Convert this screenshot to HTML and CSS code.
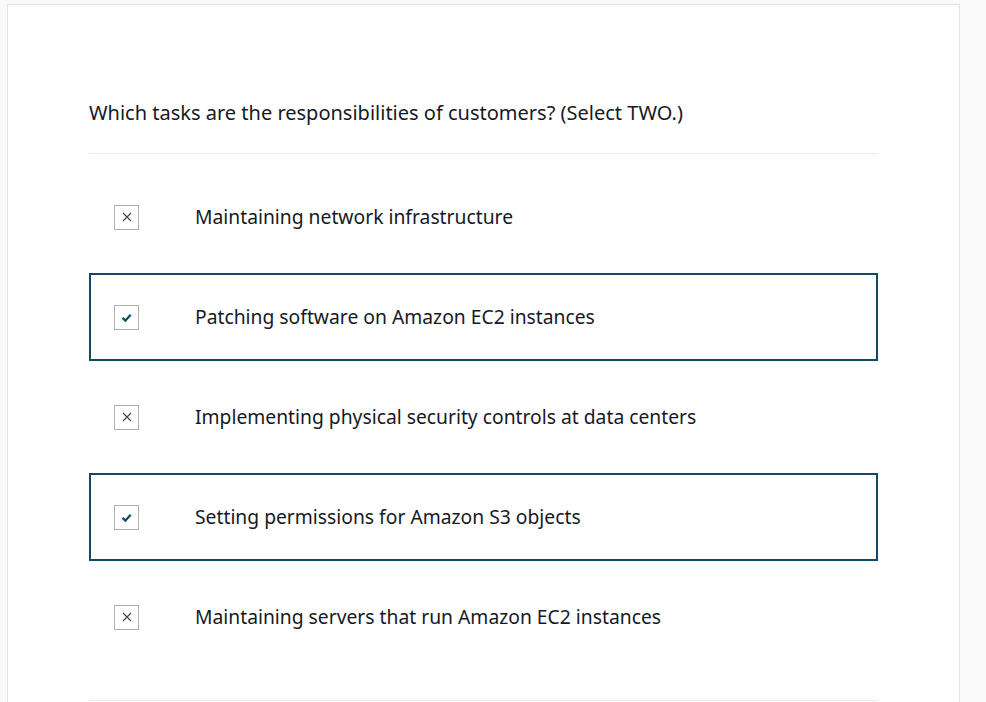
FILE: index.html
```html
<!DOCTYPE html>
<html lang="en">
<head>
<meta charset="utf-8">
<title>Question</title>
<link rel="stylesheet" href="styles.css">
</head>
<body>
<div class="page">
  <div class="card">
    <h1 class="question">Which tasks are the responsibilities of customers? (Select TWO.)</h1>
    <div class="divider"></div>
    <ul class="options">
      <li class="option">
        <span class="box"><svg viewBox="0 0 10 10" width="10" height="10"><path d="M1 1L9 9M9 1L1 9" stroke="#444" stroke-width="1.1" fill="none"/></svg></span>
        <span class="label">Maintaining network infrastructure</span>
      </li>
      <li class="option selected">
        <span class="box"><svg viewBox="0 0 10 10" width="11" height="11"><path d="M1.3 5.3L4 7.8L8.8 2.6" stroke="#0f4a66" stroke-width="2" fill="none"/></svg></span>
        <span class="label">Patching software on Amazon EC2 instances</span>
      </li>
      <li class="option">
        <span class="box"><svg viewBox="0 0 10 10" width="10" height="10"><path d="M1 1L9 9M9 1L1 9" stroke="#444" stroke-width="1.1" fill="none"/></svg></span>
        <span class="label">Implementing physical security controls at data centers</span>
      </li>
      <li class="option selected">
        <span class="box"><svg viewBox="0 0 10 10" width="11" height="11"><path d="M1.3 5.3L4 7.8L8.8 2.6" stroke="#0f4a66" stroke-width="2" fill="none"/></svg></span>
        <span class="label">Setting permissions for Amazon S3 objects</span>
      </li>
      <li class="option">
        <span class="box"><svg viewBox="0 0 10 10" width="10" height="10"><path d="M1 1L9 9M9 1L1 9" stroke="#444" stroke-width="1.1" fill="none"/></svg></span>
        <span class="label">Maintaining servers that run Amazon EC2 instances</span>
      </li>
    </ul>
    <div class="divider"></div>
  </div>
</div>
</body>
</html>
```
FILE: styles.css
```css
html, body {
  margin: 0;
  padding: 0;
}
body {
  background: #fafafa;
  font-family: "Noto Sans", "Open Sans", sans-serif;
  color: #16191f;
}
.page {
  padding: 4px 26px 0 7px;
  height: 698px;
  overflow: hidden;
}
.card {
  background: #fff;
  border: 1px solid #e3e3e3;
  border-bottom: none;
  padding: 93px 81px 40px 81px;
  min-height: 800px;
}
.question {
  margin: 0;
  font-size: 20px;
  font-weight: 400;
  line-height: 30px;
}
.divider {
  height: 1px;
  background: #eaeded;
  margin-top: 25px;
}
.options {
  list-style: none;
  margin: 19px 0 0 0;
  padding: 0;
  display: flex;
  flex-direction: column;
  gap: 12px;
}
.options + .divider {
  margin-top: 39px;
}
.option {
  height: 88px;
  box-sizing: border-box;
  border: 2px solid transparent;
  display: flex;
  align-items: center;
  padding: 0 23px;
}
.option.selected {
  border-color: #0f4a66;
}
.box {
  width: 25px;
  height: 25px;
  box-sizing: border-box;
  border: 1px solid #aab0b3;
  display: flex;
  align-items: center;
  justify-content: center;
  flex: none;
}
.label {
  margin-left: 56px;
  font-size: 19.3px;
  line-height: 26px;
}
```
